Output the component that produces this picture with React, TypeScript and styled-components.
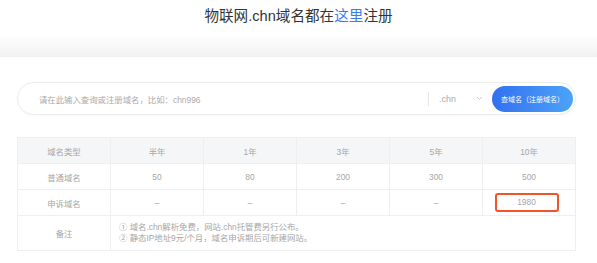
import styled, { createGlobalStyle } from 'styled-components'

const GlobalStyle = createGlobalStyle`
  body {
    margin: 0;
    background: #fff;
    font-family: "Liberation Sans", "Noto Sans CJK SC", sans-serif;
  }
`

const Page = styled.div`
  width: 597px;
  height: 263px;
  overflow: hidden;
  background: #fff;
`

const Header = styled.header`
  height: 35px;
  padding-top: 6px;
  box-sizing: border-box;
  text-align: center;
`

const Title = styled.h1`
  margin: 0;
  font-size: 14.6px;
  line-height: 20px;
  font-weight: 400;
  color: #333;
  span {
    color: #3b7cf3;
  }
`

const Band = styled.div`
  height: 22px;
  background: linear-gradient(to bottom, #ffffff 0%, #f1f1f1 100%);
`

const Main = styled.main`
  padding: 25px 0 0 17px;
  width: 559px;
`

const SearchBox = styled.div`
  height: 33px;
  box-sizing: border-box;
  border: 1px solid #ececec;
  border-radius: 17px;
  display: flex;
  align-items: center;
  padding: 0 2px 0 21px;
  box-shadow: 0 1px 3px rgba(0, 0, 0, 0.03);
`

const Placeholder = styled.div`
  flex: 1;
  font-size: 8.4px;
  color: #aaa;
`

const Divider = styled.div`
  width: 1px;
  height: 14px;
  background: #e6e6e6;
  margin-right: 10px;
`

const Suffix = styled.div`
  width: 44px;
  display: flex;
  align-items: center;
  justify-content: space-between;
  padding-right: 9px;
  font-size: 9px;
  color: #aaa;
`

const SearchButton = styled.button`
  width: 81px;
  height: 26px;
  border: none;
  border-radius: 13px;
  background: linear-gradient(to right, #3470f0, #4ba3f7);
  color: #fff;
  font-family: "Noto Sans CJK SC", sans-serif;
  font-size: 7px;
  padding: 0;
`

const Table = styled.table`
  margin-top: 22px;
  width: 559px;
  border-collapse: collapse;
  table-layout: fixed;
  font-size: 8.4px;
  color: #a6a6a6;
  td, th {
    border: 1px solid #efefef;
    text-align: center;
    font-weight: 400;
    padding: 0;
  }
`

const HeadRow = styled.tr`
  height: 26px;
  background: #f5f6f8;
`

const Row = styled.tr`
  height: 26px;
`

const NoteRow = styled.tr`
  height: 35px;
`

const NoteCell = styled.td`
  && {
    text-align: left;
    padding-left: 8px;
    line-height: 11px;
  }
`

const Highlight = styled.span`
  display: inline-block;
  width: 64px;
  height: 19px;
  line-height: 15px;
  box-sizing: border-box;
  border: 2px solid #f0552a;
  border-radius: 3px;
  margin-right: 5px;
`

const cols = ['域名类型', '半年', '1年', '3年', '5年', '10年']

export default function App() {
  return (
    <Page>
      <GlobalStyle />
      <Header>
        <Title>
          物联网.chn域名都在<span>这里</span>注册
        </Title>
      </Header>
      <Band />
      <Main>
        <SearchBox>
          <Placeholder>请在此输入查询或注册域名，比如：chn996</Placeholder>
          <Divider />
          <Suffix>
            .chn
            <svg width="7" height="5" viewBox="0 0 7 5">
              <path d="M1 1l2.5 2.5L6 1" fill="none" stroke="#bbb" strokeWidth="0.8" />
            </svg>
          </Suffix>
          <SearchButton>查域名（注册域名）</SearchButton>
        </SearchBox>
        <Table>
          <thead>
            <HeadRow>
              {cols.map((c) => (
                <th key={c}>{c}</th>
              ))}
            </HeadRow>
          </thead>
          <tbody>
            <Row>
              <td>普通域名</td>
              <td>50</td>
              <td>80</td>
              <td>200</td>
              <td>300</td>
              <td>500</td>
            </Row>
            <Row>
              <td>申诉域名</td>
              <td>–</td>
              <td>–</td>
              <td>–</td>
              <td>–</td>
              <td>
                <Highlight>1980</Highlight>
              </td>
            </Row>
            <NoteRow>
              <td>备注</td>
              <NoteCell colSpan={5}>
                ① 域名.chn解析免费，网站.chn托管费另行公布。
                <br />② 静态IP地址9元/个月，域名申诉期后可新建网站。
              </NoteCell>
            </NoteRow>
          </tbody>
        </Table>
      </Main>
    </Page>
  )
}
